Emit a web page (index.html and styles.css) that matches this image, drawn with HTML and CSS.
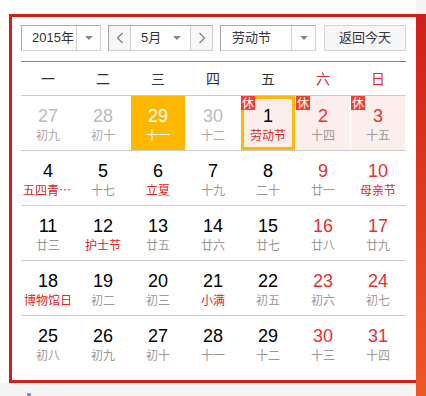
FILE: index.html
```html
<!DOCTYPE html>
<html lang="zh">
<head>
<meta charset="utf-8">
<link rel="stylesheet" href="styles.css">
</head>
<body>
<div class="page">
  <div class="main">
    <div class="top">
      <div class="frame">
        <div class="controls">
          <div class="select year">
            <span class="sel-text">2015年</span>
            <span class="sel-arrow"><i class="tri"></i></span>
          </div>
          <div class="month-group">
            <span class="nav"><svg width="8" height="12" viewBox="0 0 8 12"><polyline points="6.5,1 1.5,6 6.5,11" fill="none" stroke="#777" stroke-width="1.1"/></svg></span>
            <span class="month-sel"><span class="sel-text">5月</span><i class="tri"></i></span>
            <span class="nav"><svg width="8" height="12" viewBox="0 0 8 12"><polyline points="1.5,1 6.5,6 1.5,11" fill="none" stroke="#777" stroke-width="1.1"/></svg></span>
          </div>
          <div class="select holiday">
            <span class="sel-text">劳动节</span>
            <span class="sel-arrow"><i class="tri"></i></span>
          </div>
          <div class="today-btn">返回今天</div>
        </div>
        <div class="week-head">
          <span>一</span><span>二</span><span>三</span><span>四</span><span>五</span><span class="wkend">六</span><span class="wkend">日</span>
        </div>
        <div class="row">
          <div class="cell other"><b>27</b><em>初九</em></div>
          <div class="cell other"><b>28</b><em>初十</em></div>
          <div class="cell selected"><b>29</b><em>十一</em></div>
          <div class="cell other"><b>30</b><em>十二</em></div>
          <div class="cell rest current"><span class="badge">休</span><b>1</b><em class="fest">劳动节</em></div>
          <div class="cell rest wkend"><span class="badge">休</span><b>2</b><em>十四</em></div>
          <div class="cell rest wkend"><span class="badge">休</span><b>3</b><em>十五</em></div>
        </div>
        <div class="row">
          <div class="cell"><b>4</b><em class="fest">五四青年节</em></div>
          <div class="cell"><b>5</b><em>十七</em></div>
          <div class="cell"><b>6</b><em class="fest">立夏</em></div>
          <div class="cell"><b>7</b><em>十九</em></div>
          <div class="cell"><b>8</b><em>二十</em></div>
          <div class="cell wkend"><b>9</b><em>廿一</em></div>
          <div class="cell wkend"><b>10</b><em class="fest">母亲节</em></div>
        </div>
        <div class="row">
          <div class="cell"><b>11</b><em>廿三</em></div>
          <div class="cell"><b>12</b><em class="fest">护士节</em></div>
          <div class="cell"><b>13</b><em>廿五</em></div>
          <div class="cell"><b>14</b><em>廿六</em></div>
          <div class="cell"><b>15</b><em>廿七</em></div>
          <div class="cell wkend"><b>16</b><em>廿八</em></div>
          <div class="cell wkend"><b>17</b><em>廿九</em></div>
        </div>
        <div class="row">
          <div class="cell"><b>18</b><em class="fest">博物馆日</em></div>
          <div class="cell"><b>19</b><em>初二</em></div>
          <div class="cell"><b>20</b><em>初三</em></div>
          <div class="cell"><b>21</b><em class="fest">小满</em></div>
          <div class="cell"><b>22</b><em>初五</em></div>
          <div class="cell wkend"><b>23</b><em>初六</em></div>
          <div class="cell wkend"><b>24</b><em>初七</em></div>
        </div>
        <div class="row last">
          <div class="cell"><b>25</b><em>初八</em></div>
          <div class="cell"><b>26</b><em>初九</em></div>
          <div class="cell"><b>27</b><em>初十</em></div>
          <div class="cell"><b>28</b><em>十一</em></div>
          <div class="cell"><b>29</b><em>十二</em></div>
          <div class="cell wkend"><b>30</b><em>十三</em></div>
          <div class="cell wkend"><b>31</b><em>十四</em></div>
        </div>
      </div>
    </div>
    <div class="bottom"><span class="blue-mark"></span></div>
  </div>
  <div class="strip"></div>
</div>
</body>
</html>
```

FILE: styles.css
```css
* { box-sizing: border-box; }
html, body { margin: 0; padding: 0; }
body {
  background: #f5f5f5;
  font-family: "Liberation Sans", Arial, "Noto Sans CJK SC", sans-serif;
  color: #333;
  width: 426px;
  height: 396px;
  overflow: hidden;
}
.page { display: flex; width: 426px; height: 396px; }
.main { width: 416px; display: flex; flex-direction: column; }
.top { background: #fff; padding-top: 14px; }
.frame {
  margin-left: 9px;
  width: 407px;
  border: 3px solid #cf1f1a;
  border-right: none;
  padding: 8px 10px 10px 9px;
  background: #fff;
}
.strip {
  width: 10px;
  margin-top: 14px;
  height: 382px;
  background: linear-gradient(#cf1f1a, #f05728);
}
.bottom { height: 13px; background: #f5f5f5; position: relative; }
.blue-mark {
  position: absolute;
  left: 27px;
  top: 10px;
  width: 4px;
  height: 3px;
  background: #5b9be6;
  border-radius: 1px 1px 0 0;
}
.controls {
  display: flex;
  height: 26px;
  font-size: 13px;
  font-family: "Liberation Sans", Arial, "Noto Sans CJK SC", sans-serif;
  color: #333;
}
.select, .month-group, .today-btn {
  border: 1px solid;
  border-color: #a8a8a8 #cfcfcf #cfcfcf #a8a8a8;
  display: flex;
  align-items: center;
  background: #fff;
}
.year { width: 80px; }
.holiday { width: 96px; margin-left: 7px; }
.sel-text { flex: 1; padding-left: 10px; line-height: 24px; }
.holiday .sel-text { padding-left: 11px; }
.sel-arrow {
  width: 24px;
  height: 24px;
  border-left: 1px solid #cfcfcf;
  display: flex;
  align-items: center;
  justify-content: center;
}
.tri {
  display: block;
  width: 0;
  height: 0;
  border-left: 4px solid transparent;
  border-right: 4px solid transparent;
  border-top: 4px solid #888;
}
.month-group { width: 105px; margin-left: 7px; }
.nav {
  width: 22px;
  height: 24px;
  background: #f7f7f7;
  display: flex;
  align-items: center;
  justify-content: center;
}
.nav:first-child { border-right: 1px solid #cfcfcf; }
.nav:last-child { border-left: 1px solid #cfcfcf; }
.month-sel {
  flex: 1;
  display: flex;
  align-items: center;
  padding-right: 9px;
}
.month-sel .sel-text { padding-left: 10px; }
.today-btn {
  width: 82px;
  margin-left: 8px;
  justify-content: center;
  background: #f7f7f7;
  border-color: #d4d4d4;
  line-height: 24px;
}
.week-head {
  margin-top: 10px;
  border-top: 1px solid #e8574c;
  border-bottom: 1px solid #cccccc;
  height: 35px;
  display: grid;
  grid-template-columns: repeat(7, 55px);
  font-size: 14px;
  font-family: "Noto Sans CJK SC", sans-serif;
  color: #333;
}
.week-head span {
  width: 54px;
  text-align: center;
  line-height: 33px;
}
.week-head .wkend { color: #e0282a; }
.row {
  display: grid;
  grid-template-columns: repeat(7, 55px);
  border-bottom: 1px solid #cccccc;
}
.row.last { border-bottom: none; }
.cell {
  position: relative;
  width: 54px;
  height: 54px;
  padding: 10px 1px 0;
  text-align: center;
}
.cell b {
  display: block;
  font-weight: normal;
  font-size: 18px;
  line-height: 20px;
  color: #000;
  font-family: "Liberation Sans", Arial, sans-serif;
}
.cell em {
  display: block;
  font-style: normal;
  font-size: 12px;
  line-height: 17px;
  color: #999;
  font-family: "Noto Sans CJK SC", sans-serif;
  white-space: nowrap;
  overflow: hidden;
  text-overflow: ellipsis;
  max-width: 50px;
  margin: 0 auto;
}
.cell em.fest { color: #e0242a; }
.cell.wkend b { color: #e8302e; }
.cell.other b { color: #bbbbbb; }
.cell.other em { color: #aaaaaa; }
.cell.selected { background: #ffb800; }
.cell.selected b, .cell.selected em { color: #fff; }
.cell.rest { background: #fdeeee; }
.cell.current { border: 3px solid #ffb800; padding: 7px 0 0; }
.badge {
  position: absolute;
  left: 0;
  top: 0;
  width: 14px;
  height: 14px;
  background: #f2402f;
  color: #fff;
  font-size: 12px;
  line-height: 14px;
  font-family: "Noto Sans CJK SC", sans-serif;
  text-align: center;
}
.cell.current .badge { left: -3px; top: -3px; }
```
